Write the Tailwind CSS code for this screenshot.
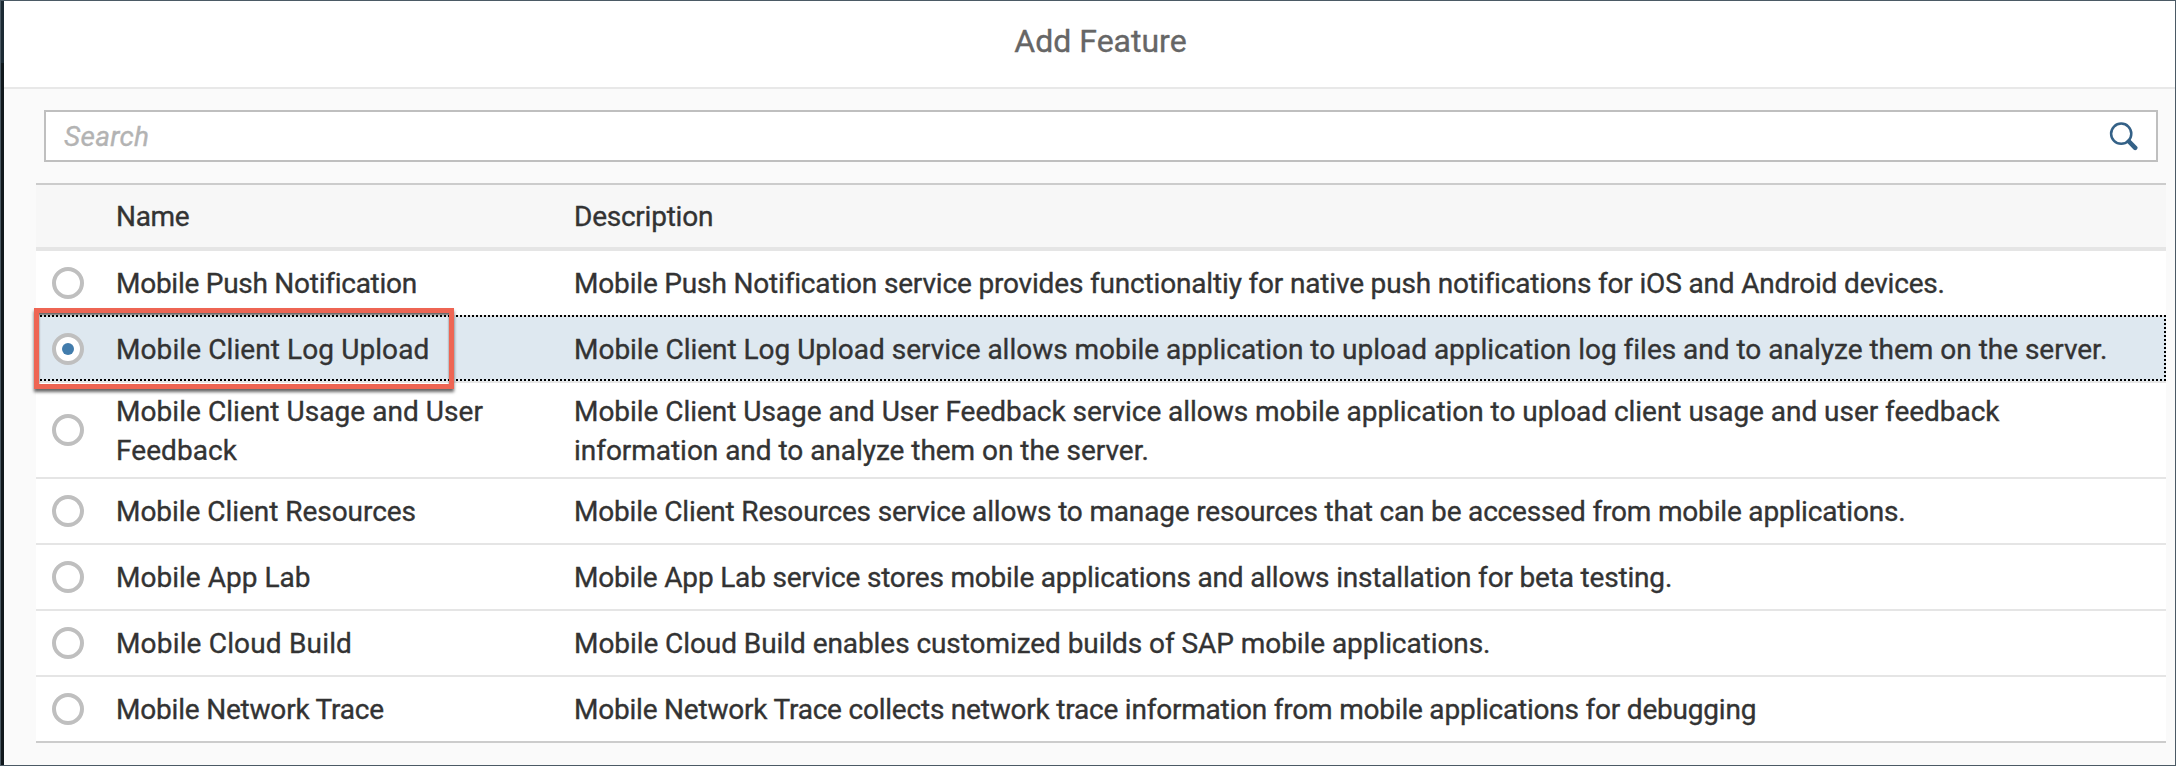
<!DOCTYPE html>
<html lang="en">
<head>
<meta charset="utf-8">
<title>Add Feature</title>
<script src="https://cdn.jsdelivr.net/npm/@tailwindcss/browser@4"></script>
</head>
<body class="h-[766px] w-[2176px] overflow-hidden bg-[#fafafa] font-[Roboto,sans-serif] text-[28px] leading-[39px] text-[#333] [-webkit-text-stroke:0.35px]">
<div class="flex h-full border border-[#4b5a65]">
  <!-- dimmed page edge left of the dialog -->
  <div class="flex w-[3px] shrink-0 flex-col bg-[#10181c]">
    <div class="h-[62px] bg-[#1b2a33]"></div>
  </div>
  <div class="flex min-w-0 flex-1 flex-col">
    <header class="flex h-[88px] items-center justify-center border-b-2 border-[#e8e8e8] bg-white pl-[22px] pb-[6px]">
      <h1 class="text-[32px] text-[#666]">Add Feature</h1>
    </header>
    <main class="flex flex-col pt-[21px] pr-[9px] pl-8">
      <div class="mr-2 ml-2 flex h-[52px] items-center justify-between border-2 border-[#bfbfbf] bg-white pr-[18px] pl-[18px]">
        <span class="italic tracking-[0.3px] text-[#b3b3b3]">Search</span>
        <svg class="h-8 w-8" viewBox="0 0 32 32" fill="none" stroke="#346187">
          <circle cx="15.2" cy="13.7" r="10.1" stroke-width="2.5"/>
          <path d="M23 21.5l6.2 6.3" stroke-width="4.6" stroke-linecap="round"/>
          <path d="M21.5 20l3 3" stroke-width="3"/>
        </svg>
      </div>
      <div class="mt-[21px] border-t-2 border-[#ccc] bg-white">
        <div class="grid h-[66px] grid-cols-[80px_458px_1fr] items-center border-b-4 border-[#e5e5e5] bg-[#f7f7f7]">
          <span></span><span class="tracking-[-0.3px]">Name</span><span class="tracking-[-0.24px]">Description</span>
        </div>
        <div class="grid h-[66px] grid-cols-[80px_458px_1fr] items-center border-b-2 border-[#e5e5e5]">
          <span class="ml-4 size-8 rounded-full border-4 border-[#bfbfbf] bg-white"></span>
          <span class="tracking-[-0.26px]">Mobile Push Notification</span>
          <span class="whitespace-nowrap tracking-[-0.17px]">Mobile Push Notification service provides functionaltiy for native push notifications for iOS and Android devices.</span>
        </div>
        <div class="relative grid h-[66px] grid-cols-[80px_458px_1fr] items-center border-b-2 border-[#e5e5e5] bg-[#dee8f0]">
          <span class="ml-4 flex size-8 items-center justify-center rounded-full border-4 border-[#bfbfbf] bg-white"><span class="size-3 rounded-full bg-[#427cac]"></span></span>
          <span class="tracking-[0.09px]">Mobile Client Log Upload</span>
          <span class="whitespace-nowrap tracking-[-0.018px]">Mobile Client Log Upload service allows mobile application to upload application log files and to analyze them on the server.</span>
          <!-- focus ring -->
          <div class="absolute -top-0.5 right-0 bottom-0 left-0 border-2 border-dotted border-black"></div>
          <!-- callout frame -->
          <div class="absolute -top-[9px] -left-[2px] h-[81px] w-[420px] border-5 border-[#ee6553] shadow-[0_3px_3px_rgba(0,0,0,0.6),inset_0_2px_2px_rgba(0,0,0,0.6)]"></div>
        </div>
        <div class="grid h-[96px] grid-cols-[80px_458px_1fr] items-center border-b-2 border-[#e5e5e5]">
          <span class="ml-4 size-8 rounded-full border-4 border-[#bfbfbf] bg-white"></span>
          <span class="pt-0.5 tracking-[0.05px]">Mobile Client Usage and User<br>Feedback</span>
          <span class="whitespace-nowrap pt-0.5 tracking-[-0.036px]">Mobile Client Usage and User Feedback service allows mobile application to upload client usage and user feedback<br>information and to analyze them on the server.</span>
        </div>
        <div class="grid h-[66px] grid-cols-[80px_458px_1fr] items-center border-b-2 border-[#e5e5e5]">
          <span class="ml-4 size-8 rounded-full border-4 border-[#bfbfbf] bg-white"></span>
          <span class="tracking-[-0.04px]">Mobile Client Resources</span>
          <span class="whitespace-nowrap tracking-[-0.176px]">Mobile Client Resources service allows to manage resources that can be accessed from mobile applications.</span>
        </div>
        <div class="grid h-[66px] grid-cols-[80px_458px_1fr] items-center border-b-2 border-[#e5e5e5]">
          <span class="ml-4 size-8 rounded-full border-4 border-[#bfbfbf] bg-white"></span>
          <span class="tracking-[0.02px]">Mobile App Lab</span>
          <span class="whitespace-nowrap tracking-[-0.18px]">Mobile App Lab service stores mobile applications and allows installation for beta testing.</span>
        </div>
        <div class="grid h-[66px] grid-cols-[80px_458px_1fr] items-center border-b-2 border-[#e5e5e5]">
          <span class="ml-4 size-8 rounded-full border-4 border-[#bfbfbf] bg-white"></span>
          <span class="tracking-[0.17px]">Mobile Cloud Build</span>
          <span class="whitespace-nowrap tracking-[-0.07px]">Mobile Cloud Build enables customized builds of SAP mobile applications.</span>
        </div>
        <div class="grid h-[66px] grid-cols-[80px_458px_1fr] items-center border-b-2 border-[#ccc]">
          <span class="ml-4 size-8 rounded-full border-4 border-[#bfbfbf] bg-white"></span>
          <span class="tracking-[-0.2px]">Mobile Network Trace</span>
          <span class="whitespace-nowrap tracking-[-0.212px]">Mobile Network Trace collects network trace information from mobile applications for debugging</span>
        </div>
      </div>
    </main>
  </div>
</div>
</body>
</html>
